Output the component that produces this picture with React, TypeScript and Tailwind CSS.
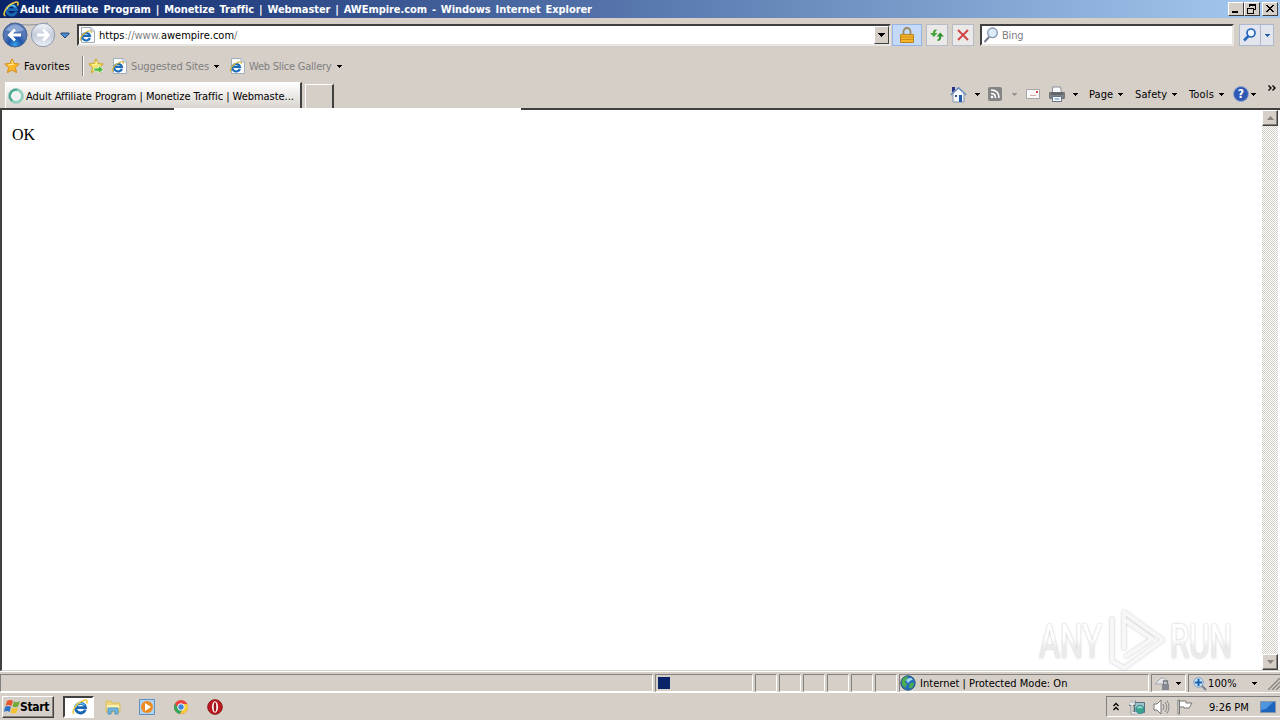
import React from 'react';

type IconProps = { className?: string };

const IELogo: React.FC<IconProps> = ({ className = 'w-4 h-4' }) => (
  <svg viewBox="0 0 16 16" className={className}>
    <path d="M13.3 10.6 A5 4.8 0 1 1 13.5 8.6 H5" fill="none" stroke="#1a68b4" strokeWidth="2.9" />
    <path d="M3.8 8 A4.8 4.6 0 0 1 12.6 6.4" fill="none" stroke="#5cc0f4" strokeWidth="1.6" />
    <path d="M2.5 14.8 C-2 14 4.5 3 12.5 1.2 C15.2 .7 15.7 2.3 14.4 4.6" fill="none" stroke="#f0cb3e" strokeWidth="1.5" />
  </svg>
);

const IEPage = () => (
  <svg viewBox="0 0 16 16" className="w-4 h-4 shrink-0">
    <path d="M2.5 .5 H12 L15.5 4 V15.5 H2.5 Z" fill="#fafcff" stroke="#a3adba" />
    <path d="M12 .5 V4 H15.5" fill="#dce6f2" stroke="#a3adba" />
    <path d="M10.9 10.9 A3.9 3.7 0 1 1 11 9 H4.5" fill="none" stroke="#1c6cb8" strokeWidth="2.2" />
    <path d="M1.8 13.6 C-.8 12.4 5 4.8 10.6 3.8 C12.4 3.4 12.6 4.6 12 6" fill="none" stroke="#e3b830" strokeWidth="1.1" />
  </svg>
);

const Star: React.FC<{ add?: boolean }> = ({ add }) => (
  <svg viewBox="0 0 16 16" className="w-4 h-4 shrink-0">
    <path d="M8 .8 L10.1 5.5 L15.3 6 L11.4 9.5 L12.6 14.7 L8 12 L3.4 14.7 L4.6 9.5 L.7 6 L5.9 5.5 Z" fill={add ? '#f6e163' : '#fbb92a'} stroke={add ? '#c9a52a' : '#d58f1c'} />
    <path d="M8 3 L9.2 6.5 L6.8 6.6 L4 7" fill="none" stroke="#fff3a8" />
    {add && <path d="M6 10 H10.5 V7.6 L15.6 11.6 L10.5 15.4 V13.2 H6 Z" fill="#4cb83f" stroke="#e9f8df" strokeWidth=".8" />}
  </svg>
);

const Caret: React.FC<IconProps> = ({ className = 'text-black' }) => (
  <svg viewBox="0 0 5 3" className={`w-[5px] h-[3px] shrink-0 ${className}`} shapeRendering="crispEdges">
    <path d="M0 0 H5 L2.5 3 Z" fill="currentColor" />
  </svg>
);

export default function App() {
  return (
    <div className="w-[1280px] h-[720px] overflow-hidden flex flex-col bg-[#d5cfc8] text-[11px] leading-[14px] text-black whitespace-nowrap font-['DejaVu_Sans_Condensed','DejaVu_Sans',sans-serif]">
      {/* Title bar */}
      <div className="h-[18px] shrink-0 flex items-center bg-linear-to-r/srgb from-[#0a246a] to-[#a6caf0] pl-[3px] pr-[2px]">
        <IELogo className="w-4 h-4" />
        <span className="ml-px pt-px text-white font-bold tracking-[-0.06px] [word-spacing:1.5px]">Adult Affiliate Program | Monetize Traffic | Webmaster | AWEmpire.com - Windows Internet Explorer</span>
        <div className="ml-auto flex h-[14px]">
          {['min', 'restore', 'close'].map((b) => (
            <div key={b} className={`w-4 h-[14px] bg-[#d5cfc8] border border-t-white border-l-white border-r-[#404040] border-b-[#404040] ${b === 'close' ? 'ml-[2px]' : ''}`}>
              <svg viewBox="0 0 14 12" className="w-[14px] h-3" fill="none" stroke="#000" shapeRendering="crispEdges">
                {b === 'min' && <path d="M3 9 H9" strokeWidth="2" />}
                {b === 'restore' && <path d="M4.5 4 V1.5 H10.5 V6.5 H9 M4 2 H11 M2.5 5.5 H8.5 V10 H2.5 Z M2 5 H9" />}
                {b === 'close' && <path d="M3 2 L10 9 M4 2 L11 9 M10 2 L3 9 M11 2 L4 9" />}
              </svg>
            </div>
          ))}
        </div>
      </div>

      {/* Address bar */}
      <div className="h-[34px] shrink-0 flex items-center pl-[2px]">
        <svg viewBox="0 0 75 30" className="w-[75px] h-[30px] shrink-0">
          <defs>
            <radialGradient id="back" cy=".9">
              <stop offset="0" stopColor="#39a2eb" />
              <stop offset=".55" stopColor="#1d55ab" />
              <stop offset="1" stopColor="#5577b5" />
            </radialGradient>
            <linearGradient id="fwd" x2="0" y2="1">
              <stop stopColor="#f4f6fa" />
              <stop offset=".5" stopColor="#c3cad8" />
              <stop offset="1" stopColor="#edf2f8" />
            </linearGradient>
          </defs>
          <path d="M8 3 Q27 7 46 3" fill="none" stroke="#8d919d" />
          <circle cx="13" cy="15" r="12" fill="url(#back)" stroke="#47618f" />
          <path d="M4 10 Q13 -1 22 10 Q13 14 4 10" fill="#a9c1e4" opacity=".65" />
          <path d="M19 15 H8 M13 9.5 L7.5 15 L13 20.5" fill="none" stroke="#fff" strokeWidth="2.8" />
          <circle cx="41" cy="15" r="11.7" fill="url(#fwd)" stroke="#8c98af" />
          <path d="M35 15 H46 M41 9.5 L46.5 15 L41 20.5" fill="none" stroke="#fff" strokeWidth="2.8" />
          <path d="M59 13 H67 V14 L63 18 L59 14 Z" fill="#4c8bcb" stroke="#24517f" />
        </svg>
        <div className="w-[814px] h-[22px] shrink-0 flex items-center bg-white border-2 border-t-[#404040] border-l-[#404040] border-r-[#e8e6e0] border-b-[#e8e6e0]">
          <IEPage />
          <span className="ml-1 pt-[2px]">https<span className="text-[#808080]">://www.</span>awempire.com<span className="text-[#808080]">/</span></span>
          <div className="ml-auto w-[15px] h-[18px] flex items-center justify-center bg-[#d5cfc8] border border-t-white border-l-white border-r-[#404040] border-b-[#404040]">
            <svg viewBox="0 0 7 4" className="w-[7px] h-1" shapeRendering="crispEdges"><path d="M0 0 H7 L3.5 4 Z" /></svg>
          </div>
        </div>
        <div className="ml-px w-[30px] h-[22px] shrink-0 flex items-center justify-center bg-[#c4daf8] border border-[#94b4e5] pr-px">
          <svg viewBox="0 0 14 16" className="w-[14px] h-4">
            <path d="M3.5 8 V4.5 A3.5 3.5 0 0 1 10.5 4.5 V8" fill="none" stroke="#9a8a61" strokeWidth="1.8" />
            <path d="M.5 7.5 H13.5 V15.5 H.5 Z" fill="#f4b52b" stroke="#b98420" />
            <path d="M1 10 H13 M1 12.5 H13" stroke="#d08f1a" />
          </svg>
        </div>
        <div className="ml-[4px] w-[22px] h-[22px] shrink-0 flex items-center justify-center bg-[#ebe9e7] border border-[#b6bdc9]">
          <svg viewBox="0 0 16 16" className="w-4 h-4">
            <path d="M7.5 2.5 Q4 2 3.9 6 H1 L4.8 10 L8.6 6 H6 Q6 4.2 7.5 4 Z" fill="#45a53b" />
            <path d="M8.5 14 Q12.2 14 12.2 9.4 H15 L11.2 5.4 L7.6 9.4 H10.2 Q10 12 8.5 12.4 Z" fill="#2f9431" />
          </svg>
        </div>
        <div className="ml-[4px] w-[22px] h-[22px] shrink-0 flex items-center justify-center bg-[#ebe9e7] border border-[#b6bdc9]">
          <svg viewBox="0 0 12 12" className="w-3 h-3"><path d="M1 1 L11 11 M11 1 L1 11" stroke="#cf4548" strokeWidth="2" /></svg>
        </div>
        <div className="ml-[6px] w-[254px] h-[22px] shrink-0 flex items-center bg-white border-2 border-t-[#404040] border-l-[#404040] border-r-[#e8e6e0] border-b-[#e8e6e0] text-[#808080]">
          <svg viewBox="0 0 16 16" className="ml-px w-4 h-4 -mt-px"><path d="M6 10 L1.5 15" stroke="#777d8a" strokeWidth="2" /><circle cx="9.5" cy="5.8" r="4.8" fill="#dceafa" stroke="#8496af" strokeWidth="1.3" /></svg>
          <span className="ml-[3px] pt-[2px] tracking-[-0.2px]">Bing</span>
        </div>
        <div className="ml-[5px] w-[35px] h-[22px] shrink-0 flex bg-[#e2e5ed] border border-[#aeb8cb]">
          <svg viewBox="0 0 20 20" className="w-5 h-5"><path d="M8.5 11 L4 15.5" stroke="#2466bd" strokeWidth="2.5" /><circle cx="11" cy="8" r="4" fill="#edf6ff" stroke="#2466bd" strokeWidth="1.7" /></svg>
          <div className="flex-1 border-l border-[#aeb8cb] flex items-center justify-center"><Caret className="text-[#285fa9]" /></div>
        </div>
      </div>

      {/* Favorites bar */}
      <div className="h-[28px] shrink-0 flex items-center pl-1">
        <Star />
        <span className="ml-[4px] pt-px w-[46px] tracking-[0.12px]">Favorites</span>
        <div className="ml-3 mr-1 w-[2px] h-5 border-l border-r border-l-[#88847e] border-r-white" />
        <Star add />
        <div className="ml-[7px]"><IEPage /></div>
        <span className="ml-[4px] pt-[2px] w-[79px] tracking-[-0.12px] text-[#808080]">Suggested Sites</span>
        <div className="ml-[4px]"><Caret /></div>
        <div className="ml-[10px]"><IEPage /></div>
        <span className="ml-[4px] pt-[2px] w-[83px] tracking-[-0.23px] text-[#808080]">Web Slice Gallery</span>
        <div className="ml-[5px]"><Caret /></div>
      </div>

      {/* Tabs and command bar */}
      <div className="h-[28px] shrink-0 flex items-end pl-[5px]">
        <div className="w-[297px] h-[26px] shrink-0 flex items-center bg-linear-to-b from-white to-[#d9d5ce] border-t border-l border-white border-r-2 border-r-[#404040] pl-[2px] pt-px">
          <svg viewBox="0 0 16 16" className="w-4 h-4 shrink-0">
            <circle cx="8" cy="8" r="6.4" fill="#f0f3f2" stroke="#8ccfbd" strokeWidth="2.6" />
            <path d="M9 1.7 A6.4 6.4 0 0 0 4 13" fill="none" stroke="#3fa58d" strokeWidth="2.4" />
            <circle cx="8" cy="8" r="7.5" fill="none" stroke="#b9cfc9" strokeWidth=".8" />
          </svg>
          <span className="ml-[2px] pt-[2px] tracking-[-0.04px]">Adult Affiliate Program | Monetize Traffic | Webmaste...</span>
        </div>
        <div className="ml-[3px] w-[29px] h-6 shrink-0 border-t border-l border-white border-r-2 border-r-[#404040]" />
        <div className="ml-[616px] h-7 flex items-center">
          <svg viewBox="0 0 17 17" className="w-[17px] h-[17px]">
            <path d="M3 7 V16 H14 V7 L8.5 2 Z" fill="#f5f7fb" stroke="#8493ae" />
            <path d="M.8 9 L8.5 1.8 L16.2 9" fill="none" stroke="#6a8bbf" strokeWidth="1.5" />
            <path d="M2 1 H5 V4 L2 6.5 Z" fill="#24308b" /><path d="M9 9 H12 V16 H9 Z" fill="#235eaa" /><path d="M5 9 H7 V11 H5 Z" fill="#395579" />
          </svg>
          <div className="ml-2"><Caret /></div>
          <svg viewBox="0 0 14 14" className="ml-2 w-[14px] h-[14px]"><rect width="14" height="14" rx="2" fill="#858585" /><path d="M3 3 Q11 3 11 11 M3 6.5 Q7.5 6.5 7.5 11" fill="none" stroke="#fff" strokeWidth="1.6" /><circle cx="4" cy="10" r="1.3" fill="#fff" /></svg>
          <div className="ml-[10px]"><Caret className="text-[#96928e]" /></div>
          <svg viewBox="0 0 14 10" className="ml-[9px] w-[14px] h-[10px]"><path d="M.5 .5 H13.5 V9.5 H.5 Z" fill="#faf9fa" stroke="#aaa4a6" /><path d="M4 6.5 H10" stroke="#d9a8a8" /><path d="M10 2 H12 V4 H10 Z" fill="#d7474e" /></svg>
          <svg viewBox="0 0 16 16" className="ml-[9px] w-4 h-4"><path d="M3.5 1 H11.5 L12.5 7 H3.5 Z" fill="#f9fafb" stroke="#8c929a" /><path d="M.7 6.5 H15.3 V12.3 H.7 Z" fill="#80848b" stroke="#666a70" /><path d="M2 8 H14" stroke="#44474c" /><path d="M3.5 10.5 H12.5 V15.5 H3.5 Z" fill="#fff" stroke="#64738b" /><path d="M5.5 13 H10.5" stroke="#4886bf" /></svg>
          <div className="ml-2"><Caret /></div>
          <span className="ml-[11px] pt-px w-[26px] tracking-[0.1px]">Page</span><div className="ml-[3px]"><Caret /></div>
          <span className="ml-3 pt-px w-[33px] tracking-[0.1px]">Safety</span><div className="ml-1"><Caret /></div>
          <span className="ml-3 pt-px w-[27px] tracking-[0.15px]">Tools</span><div className="ml-[3px]"><Caret /></div>
          <div className="ml-[9px] w-4 h-4 rounded-full bg-[#3059b3] border border-[#91a6d2] text-white text-[12px] font-bold flex items-center justify-center">?</div>
          <div className="ml-[2px]"><Caret /></div>
          <svg viewBox="0 0 8 6" className="ml-3 mb-[13px] w-2 h-[6px]"><path d="M.5 .5 L3 3 L.5 5.5 M4.5 .5 L7 3 L4.5 5.5" fill="none" stroke="#000" strokeWidth="1.4" /></svg>
        </div>
      </div>

      {/* Page */}
      <div className="h-[563px] shrink-0 flex flex-col bg-white border-l-2 border-l-[#404040] border-b border-b-[#d5cfc8]">
        <div className="h-[2px] shrink-0 -ml-[2px] flex">
          <div className="w-[174px] bg-[#404040]" />
          <div className="w-[347px] bg-white" />
          <div className="flex-1 bg-[#404040]" />
        </div>
        <div className="flex-1 flex relative">
          <div className="flex-1 pl-[10px] pt-4 text-[16px] leading-[18px] font-['Liberation_Serif',serif]">OK</div>
          <div className="w-4 mr-[2px] flex flex-col justify-between bg-[#d5cfc8] bg-[conic-gradient(#fff_25%,#d5cfc8_0_50%,#fff_0_75%,#d5cfc8_0)] bg-[length:2px_2px]">
            {['up', 'down'].map((d) => (
              <div key={d} className="w-4 h-4 flex items-center justify-center bg-[#d5cfc8] border border-t-white border-l-white border-r-[#404040] border-b-[#404040] shadow-[inset_-1px_-1px_#85817b]">
                <svg viewBox="0 0 7 4" className={`w-[7px] h-1 ${d === 'up' ? 'rotate-180' : ''}`}><path d="M0 0 H7 L3.5 4 Z" fill="#86827c" /></svg>
              </div>
            ))}
          </div>
          {/* Watermark */}
          <svg viewBox="0 0 204 64" className="absolute left-[1033px] top-[497px] w-[204px] h-16 overflow-visible">
            <defs>
              <filter id="glow" x="-10%" y="-20%" width="120%" height="140%">
                <feDropShadow dx="0" dy="0" stdDeviation="1.3" floodColor="#888" floodOpacity=".55" />
              </filter>
              <linearGradient id="fade" x2="0" y2="1">
                <stop offset=".45" stopColor="#fff" />
                <stop offset=".6" stopColor="#ebebeb" />
              </linearGradient>
            </defs>
            <g filter="url(#glow)" fill="url(#fade)">
              <g fontFamily="Roboto" fontSize="48" fontWeight="400">
                <text x="4" y="51" textLength="63" lengthAdjust="spacingAndGlyphs">ANY</text>
                <text x="135" y="51" textLength="62" lengthAdjust="spacingAndGlyphs">RUN</text>
              </g>
              <path d="M89 43 V5 L128 33 L89 61 L77 54 V10 M90 50 L117 32 L90 13" fill="none" stroke="#f7f7f7" strokeWidth="4" strokeLinejoin="round" />
            </g>
          </svg>
        </div>
      </div>

      {/* Status bar */}
      <div className="h-[22px] shrink-0 flex items-end border-t border-t-white border-b border-b-white">
        <div className="w-[653px] h-[18px] border border-t-[#808080] border-l-[#808080] border-r-white border-b-white" />
        <div className="ml-[2px] w-[98px] h-[18px] flex items-center border border-t-[#808080] border-l-[#808080] border-r-white border-b-white pl-[2px]"><div className="w-3 h-3 bg-[#0a246a]" /></div>
        {[0, 1, 2, 3, 4, 5].map((i) => (
          <div key={i} className="ml-[2px] w-[22px] h-[18px] border border-t-[#808080] border-l-[#808080] border-r-white border-b-white" />
        ))}
        <div className="ml-[2px] w-[250px] h-[18px] flex items-center border border-t-[#808080] border-l-[#808080] border-r-white border-b-white">
          <svg viewBox="0 0 16 16" className="w-4 h-4"><circle cx="8" cy="8" r="7.2" fill="#286fbc" stroke="#28567f" /><path d="M2 5 Q4 1 8 1.5 L7 4 L5 7 L7 9 L5 13 L2 10 Z M10 8 L14.5 8 L12 13 L9 13 Z" fill="#4cad4d" /><path d="M6 5 Q10 1.5 13 4.5 Q10 5 8 8 Z" fill="#9ddcf5" /></svg>
          <span className="ml-1 pt-px tracking-[0.02px]">Internet | Protected Mode: On</span>
        </div>
        <div className="ml-[2px] w-[35px] h-[18px] flex items-center border border-t-[#808080] border-l-[#808080] border-r-white border-b-white">
          <svg viewBox="0 0 17 16" className="ml-[2px] w-[17px] h-4"><path d="M1 9 L7 3 A6 6 0 0 1 13 6 L9 12 L8 9 Z" fill="#e6e7e9" stroke="#a6a8ad" /><path d="M8 9 H15 V15 H8 Z" fill="#858991" /><path d="M9.5 9 V6 H13.5 V9" fill="none" stroke="#747a83" strokeWidth="1.3" /></svg>
          <div className="ml-[5px]"><Caret /></div>
        </div>
        <div className="ml-[2px] flex-1 h-[18px] flex items-center border-t border-l border-[#808080]">
          <svg viewBox="0 0 14 14" className="ml-[4px] w-[14px] h-[14px]"><path d="M8 8 L13 13" stroke="#77818e" strokeWidth="2" /><circle cx="5.5" cy="5.5" r="4.7" fill="#cfe5fb" stroke="#6f9cc9" /><path d="M5.5 2 V9 M2 5.5 H9" stroke="#1960af" strokeWidth="2" /></svg>
          <span className="ml-px pt-px w-[30px] tracking-[0.1px]">100%</span>
          <div className="ml-[14px]"><Caret /></div>
          <svg viewBox="0 0 12 12" className="ml-auto w-3 h-3"><path d="M0 12 L12 0 M4 12 L12 4 M8 12 L12 8" stroke="#8c8882" strokeWidth="1.5" /></svg>
        </div>
      </div>

      {/* Taskbar */}
      <div className="h-[27px] shrink-0 flex items-start pt-[3px] pl-[2px]">
        <div className="w-[52px] h-[22px] flex items-center border border-t-white border-l-white border-r-[#404040] border-b-[#404040] shadow-[inset_-1px_-1px_#85817b] pl-px">
          <svg viewBox="0 0 16 16" className="w-4 h-4"><path d="M3 2 Q6 0 9 2 L7.5 7 Q4 5 1.5 7 Z" fill="#e6552b" /><path d="M10 2.5 Q13 4 16 2 L14 7.5 Q11 9 8.5 7.5 Z" fill="#70aa38" /><path d="M1 8 Q4 6 7 8 L5.5 13 Q3 11 0 13 Z" fill="#2d72c4" /><path d="M8 9 Q11 10 14 8.5 L12.5 14 Q9 15 6.5 13.5 Z" fill="#f2c231" /></svg>
          <span className="text-[12px] font-bold tracking-[-0.35px]">Start</span>
        </div>
        <div className="ml-[9px] w-[31px] h-[22px] flex items-center justify-center bg-white border-2 border-t-[#404040] border-l-[#404040] border-r-white border-b-white pl-[3px]"><IELogo /></div>
        <div className="ml-[11px] h-[22px] flex items-center gap-[18px]">
          <svg viewBox="0 0 16 16" className="w-4 h-4"><path d="M1 2 H6 L7 4 H15 V13 H1 Z" fill="#edd57c" stroke="#d6bd64" /><path d="M2 6 H14 V11 H2 Z" fill="#fff1b2" /><path d="M3 15 V9 H13 V15 H10 V12 H6 V15 Z" fill="#75b8df" stroke="#4b93bd" /></svg>
          <svg viewBox="0 0 16 16" className="w-4 h-4"><path d="M.5 .5 H15.5 V15.5 H.5 Z" fill="#b2d2ee" stroke="#5c91c5" /><circle cx="8" cy="8" r="6" fill="#ed8b23" /><path d="M6 4 L12 8 L6 12 Z" fill="#fff" /></svg>
          <svg viewBox="0 0 16 16" className="w-4 h-4"><circle cx="8" cy="8" r="7" fill="#e9443b" /><path d="M2 4.5 A7 7 0 0 0 7 15 L10 9 L5 9 Z" fill="#36a759" /><path d="M8 5 H14.3 A7 7 0 0 1 7 15 L11 8 Z" fill="#f5cf3b" /><circle cx="8" cy="8" r="3.3" fill="#3d82dc" stroke="#fff" /></svg>
          <svg viewBox="0 0 16 16" className="w-4 h-4"><circle cx="8" cy="8" r="7.3" fill="#bd1820" stroke="#8d141b" /><ellipse cx="8" cy="8" rx="3" ry="5.8" fill="#fff" /><ellipse cx="8" cy="8" rx="1.3" ry="4.8" fill="#99151b" /></svg>
        </div>
        <div className="ml-auto w-[174px] h-[21px] flex items-center border-t border-l border-[#808080] border-b border-b-white">
          <svg viewBox="0 0 6 9" className="ml-[6px] w-[6px] h-[9px]"><path d="M.5 4 L3 1.5 L5.5 4 M.5 8 L3 5.5 L5.5 8" fill="none" stroke="#000" strokeWidth="1.3" /></svg>
          <svg viewBox="0 0 16 16" className="ml-[10px] w-4 h-4"><path d="M5.5 3.5 H15.5 V13.5 H5.5 Z" fill="#9fc3c9" stroke="#54717d" /><path d="M.8 1 V5.5 H5.2 V1 M3 5 V14 H8" fill="none" stroke="#5f6b70" strokeWidth="2.6" /><path d="M1 1 V5 H5 V1 M3 5 V14 H8" fill="none" stroke="#fff" strokeWidth="1.3" /><circle cx="11" cy="10.5" r="4.2" fill="#3aa58c" stroke="#3f8ba0" /><path d="M8.5 9 Q11 7 13 9" fill="none" stroke="#a9e3dc" strokeWidth="1.2" /></svg>
          <svg viewBox="0 0 17 16" className="ml-2 w-[17px] h-4"><path d="M1 5 H4 L8 1 V15 L4 11 H1 Z" fill="#fff" stroke="#777" /><path d="M10 5 Q12 8 10 11 M12 3 Q15.5 8 12 13 M14 1.5 Q18 8 14 14.5" fill="none" stroke="#888" /></svg>
          <svg viewBox="0 0 16 16" className="ml-[7px] w-4 h-4"><path d="M1 1 H2.5 V15 H1 Z M2.5 2 H9 V4 H15 L12 9 H7 V8 H2.5 Z" fill="#fff" stroke="#777" /></svg>
          <span className="ml-4 pt-[2px] w-[40px]">9:26 PM</span>
          <svg viewBox="0 0 16 14" className="ml-auto mr-1 w-4 h-[14px]"><path d="M.5 1.5 H15.5 V12.5 H.5 Z" fill="#1d65bc" stroke="#8295aa" /><path d="M1 2 H13 L6 9 L1 10 Z" fill="#4e95df" /></svg>
        </div>
      </div>
    </div>
  );
}
